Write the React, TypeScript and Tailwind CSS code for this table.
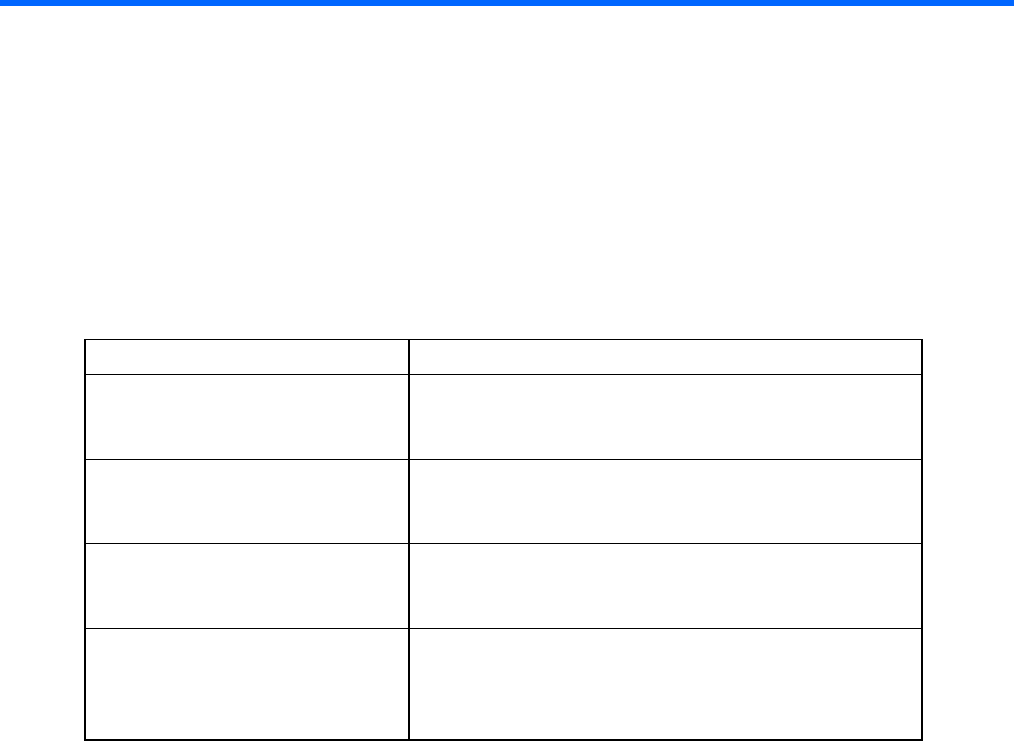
const rows = [
  { h: 'h-[85px]' },
  { h: 'h-[84px]' },
  { h: 'h-[85px]' },
  { h: 'h-[110px]' },
];

export default function App() {
  return (
    <div className="min-h-[741px] w-[1014px] bg-white font-['Liberation_Sans',sans-serif]">
      <div className="h-[6px] bg-[#0066ff]" />
      <div className="pl-[84px] pt-[333px]">
        <div className="w-[839px] border-t border-l-2 border-r-2 border-b-2 border-black">
          <div className="flex h-[35px] border-b border-black">
            <div className="w-[324px] border-r-2 border-black" />
            <div className="flex-1" />
          </div>
          {rows.map((r, i) => (
            <div
              key={i}
              className={`flex ${r.h} ${i < rows.length - 1 ? 'border-b border-black' : ''}`}
            >
              <div className="w-[324px] border-r-2 border-black" />
              <div className="flex-1" />
            </div>
          ))}
        </div>
      </div>
    </div>
  );
}
